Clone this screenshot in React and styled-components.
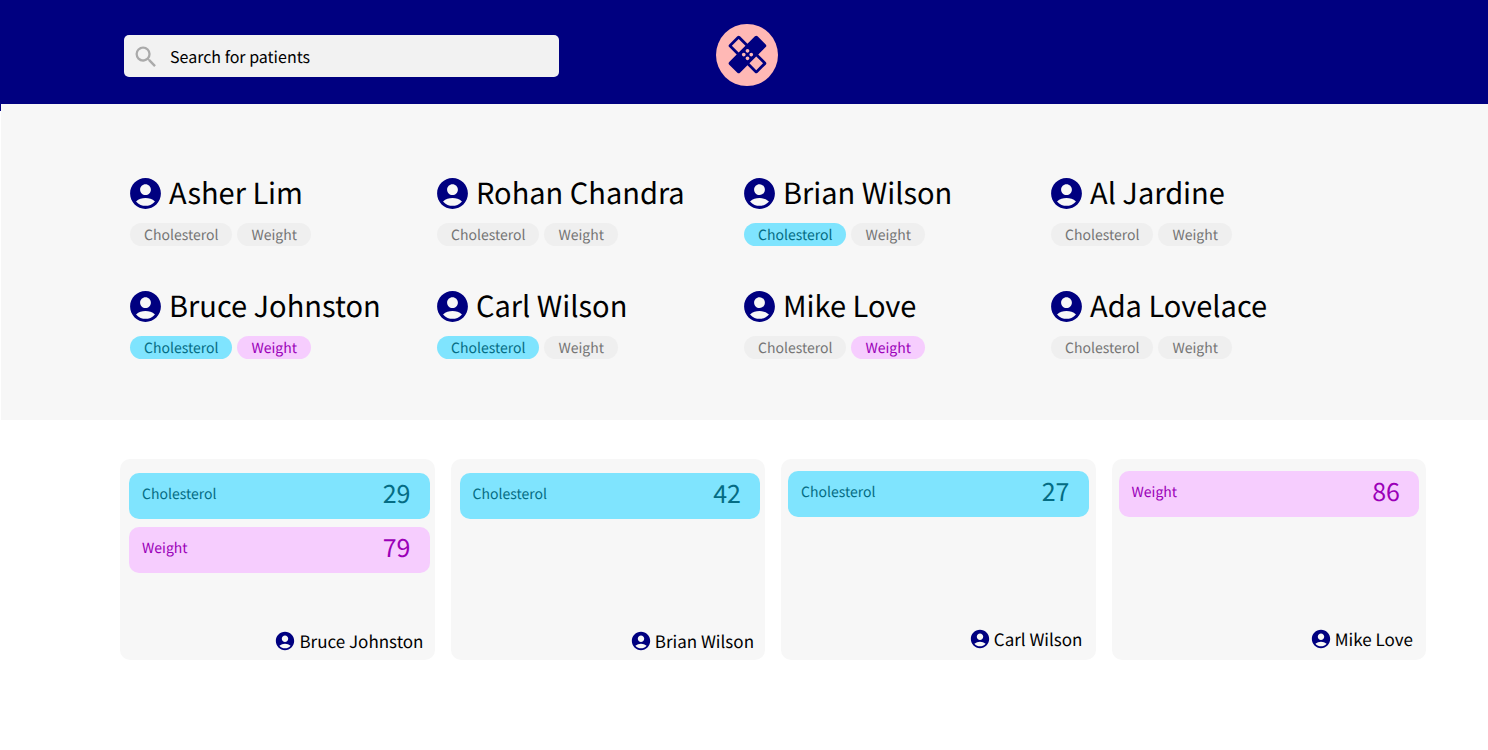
import React from "react";
import styled, { createGlobalStyle, css } from "styled-components";
import { MdAccountCircle, MdHealing, MdSearch } from "react-icons/md";

const GlobalStyle = createGlobalStyle`
  *, *::before, *::after { box-sizing: border-box; }
  body {
    margin: 0;
    background: #fff;
    color: #000;
    font-family: "Noto Sans CJK SC", "Noto Sans", sans-serif;
    text-rendering: geometricPrecision;
  }
`;

const tones = {
  muted: css`
    background: #efefef;
    color: #757575;
  `,
  Cholesterol: css`
    background: #7fe4fe;
    color: #046c84;
  `,
  Weight: css`
    background: #f6cdfe;
    color: #9b00b8;
  `,
};

const Header = styled.header`
  display: grid;
  grid-template-columns: 1fr auto 1fr;
  align-items: center;
  height: 111px;
  padding: 0 0 2px 6px;
  background: #000080;
`;

const SearchBox = styled.label`
  display: flex;
  align-items: center;
  gap: 10px;
  height: 42px;
  max-width: 435px;
  width: calc(100% - 118px);
  margin: 3px 0 0 118px;
  padding: 2px 10px 0 8px;
  border-radius: 5px;
  background: #f2f2f2;
  color: #aaa;

  svg {
    flex: none;
  }
`;

const SearchInput = styled.input`
  flex: 1;
  min-width: 0;
  padding: 0 0 2px;
  border: 0;
  outline: 0;
  background: transparent;
  color: #000;
  font: inherit;
  font-size: 16px;
  line-height: 24px;
  text-rendering: inherit;

  &::placeholder {
    color: #000;
    opacity: 1;
  }
`;

const Logo = styled.a`
  display: flex;
  align-items: center;
  justify-content: center;
  width: 62px;
  height: 62px;
  border-radius: 50%;
  background: #ffb8b5;
  color: #000080;
`;

const Patients = styled.section`
  margin: -7px 0 0 1px;
  padding: 69px 130px 61px 129px;
  background: #f7f7f7;
`;

const PatientGrid = styled.ul`
  display: grid;
  grid-template-columns: repeat(4, minmax(0, 1fr));
  row-gap: 40px;
  margin: 0;
  padding: 0;
  list-style: none;
`;

const PatientName = styled.h2`
  display: flex;
  align-items: center;
  gap: 5px;
  height: 40px;
  margin: 0 0 10px -3px;
  font-size: 29px;
  font-weight: 400;
  line-height: 36px;
  white-space: nowrap;

  svg {
    flex: none;
    color: #000080;
  }
`;

const NameText = styled.span`
  padding-bottom: 2px;
`;

const Tags = styled.div`
  display: flex;
  gap: 5px;
`;

const Tag = styled.span`
  height: 23px;
  padding: 0 14px;
  border-radius: 12px;
  font-size: 14px;
  line-height: 24px;
  ${(p) => tones[p.$tone]}
`;

const Cards = styled.section`
  display: grid;
  grid-template-columns: repeat(4, minmax(0, 1fr));
  gap: 16px;
  padding: 39px 62px 40px 120px;
`;

const Card = styled.article`
  display: flex;
  flex-direction: column;
  gap: 8px;
  min-height: 201px;
  padding: ${(p) => (p.$tight ? "12px 7px 8px" : "14px 5px 6px 9px")};
  border-radius: 10px;
  background: #f7f7f7;
`;

const Metric = styled.div`
  display: flex;
  align-items: center;
  justify-content: space-between;
  height: 46px;
  padding: 0 19px 4px 13px;
  border-radius: 10px;
  font-size: 14px;
  ${(p) => tones[p.$tone]}
`;

const MetricValue = styled.strong`
  padding-bottom: 2px;
  font-size: 25px;
  font-weight: 400;
  line-height: 40px;
`;

const CardOwner = styled.footer`
  display: flex;
  align-items: center;
  justify-content: flex-end;
  gap: 3px;
  margin-top: auto;
  padding-right: 6px;
  font-size: 17px;
  line-height: 26px;

  svg {
    color: #000080;
  }
`;

const METRICS = ["Cholesterol", "Weight"];

const patients = [
  { name: "Asher Lim", flags: [] },
  { name: "Rohan Chandra", flags: [] },
  { name: "Brian Wilson", flags: ["Cholesterol"] },
  { name: "Al Jardine", flags: [] },
  { name: "Bruce Johnston", flags: ["Cholesterol", "Weight"] },
  { name: "Carl Wilson", flags: ["Cholesterol"] },
  { name: "Mike Love", flags: ["Weight"] },
  { name: "Ada Lovelace", flags: [] },
];

const cards = [
  { name: "Bruce Johnston", values: [["Cholesterol", 29], ["Weight", 79]] },
  { name: "Brian Wilson", values: [["Cholesterol", 42]] },
  { name: "Carl Wilson", values: [["Cholesterol", 27]], tight: true },
  { name: "Mike Love", values: [["Weight", 86]], tight: true },
];

export default function App() {
  return (
    <>
      <GlobalStyle />
      <Header>
        <SearchBox>
          <MdSearch size={28} aria-hidden="true" />
          <SearchInput
            type="text"
            placeholder="Search for patients"
            aria-label="Search for patients"
          />
        </SearchBox>
        <Logo href="#" aria-label="Home">
          <MdHealing size={45} aria-hidden="true" />
        </Logo>
      </Header>
      <main>
        <Patients>
          <PatientGrid>
            {patients.map(({ name, flags }) => (
              <li key={name}>
                <PatientName>
                  <MdAccountCircle size={37} aria-hidden="true" />
                  <NameText>{name}</NameText>
                </PatientName>
                <Tags>
                  {METRICS.map((m) => (
                    <Tag key={m} $tone={flags.includes(m) ? m : "muted"}>
                      {m}
                    </Tag>
                  ))}
                </Tags>
              </li>
            ))}
          </PatientGrid>
        </Patients>
        <Cards>
          {cards.map(({ name, values, tight }) => (
            <Card key={name} $tight={tight}>
              {values.map(([label, value]) => (
                <Metric key={label} $tone={label}>
                  {label}
                  <MetricValue>{value}</MetricValue>
                </Metric>
              ))}
              <CardOwner>
                <MdAccountCircle size={22} aria-hidden="true" />
                {name}
              </CardOwner>
            </Card>
          ))}
        </Cards>
      </main>
    </>
  );
}
